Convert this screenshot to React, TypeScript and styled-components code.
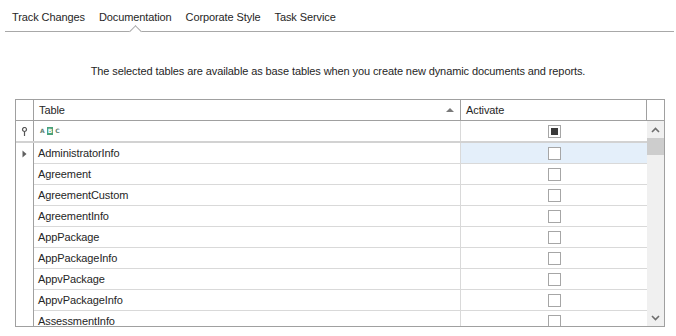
import styled, { createGlobalStyle } from 'styled-components';

const GlobalStyle = createGlobalStyle`
  html, body {
    margin: 0;
    padding: 0;
    background: #ffffff;
  }
  body {
    font-family: 'Liberation Sans', Arial, sans-serif;
    font-size: 11px;
    letter-spacing: -0.1px;
    color: #2b2b2b;
  }
`;

const Page = styled.div`
  width: 676px;
  height: 336px;
  overflow: hidden;
  display: flex;
  flex-direction: column;
`;

const TabBar = styled.div`
  display: flex;
  margin: 0 2px 0 5px;
  height: 31px;
  border-bottom: 1px solid #a8a8a8;
`;

const Tab = styled.div<{ $active?: boolean }>`
  position: relative;
  padding: 11px 7px 0;
  line-height: 13px;
  color: #262626;

  &::after {
    content: '';
    display: ${(p) => (p.$active ? 'block' : 'none')};
    position: absolute;
    left: 50%;
    bottom: -5px;
    width: 8px;
    height: 8px;
    margin-left: -4px;
    background: #ffffff;
    border-top: 1px solid #a8a8a8;
    border-left: 1px solid #a8a8a8;
    transform: rotate(45deg);
  }
`;

const Description = styled.div`
  text-align: center;
  margin-top: 33px;
  line-height: 13px;
  color: #262626;
`;

const Grid = styled.div`
  margin: 21px 0 0 15px;
  width: 648px;
  height: 226px;
  border: 1px solid #a0a0a0;
  display: flex;
  flex-direction: column;
  overflow: hidden;
`;

const HeaderRow = styled.div`
  display: grid;
  grid-template-columns: 18px 427px 186px 17px;
  height: 20px;
  border-bottom: 1px solid #a0a0a0;
`;

const HeaderCell = styled.div<{ $last?: boolean }>`
  display: flex;
  align-items: center;
  justify-content: space-between;
  padding: 0 5px;
  border-right: ${(p) => (p.$last ? 'none' : '1px solid #a0a0a0')};
  color: #262626;
`;

const SortArrow = styled.span`
  width: 0;
  height: 0;
  border-left: 4px solid transparent;
  border-right: 4px solid transparent;
  border-bottom: 4px solid #7a7a7a;
  margin-right: 1px;
`;

const Body = styled.div`
  flex: 1;
  display: flex;
  min-height: 0;
`;

const Rows = styled.div`
  flex: 1;
  display: flex;
  flex-direction: column;
  overflow: hidden;
`;

const FilterRow = styled.div`
  display: grid;
  grid-template-columns: 18px 427px 186px;
  height: 20px;
  flex-shrink: 0;
  border-bottom: 2px solid #d2d2d2;
`;

const DataRow = styled.div`
  display: grid;
  grid-template-columns: 18px 427px 186px;
  height: 21px;
  flex-shrink: 0;
`;

const IndicatorCell = styled.div`
  display: flex;
  align-items: center;
  justify-content: center;
  border-right: 1px solid #a0a0a0;
`;

const TextCell = styled.div`
  display: flex;
  align-items: center;
  padding-left: 4px;
  border-right: 1px solid #d9d9d9;
  border-bottom: 1px solid #d9d9d9;
  color: #262626;
`;

const FilterTextCell = styled.div`
  display: flex;
  align-items: center;
  padding-left: 5px;
  border-right: 1px solid #d9d9d9;
`;

const CheckCell = styled.div<{ $focused?: boolean; $filter?: boolean }>`
  display: flex;
  align-items: center;
  justify-content: center;
  background: ${(p) => (p.$focused ? '#e4effa' : '#ffffff')};
  border-bottom: ${(p) => (p.$filter ? 'none' : '1px solid #d9d9d9')};
`;

const CheckBox = styled.span<{ $mixed?: boolean }>`
  box-sizing: border-box;
  width: 13px;
  height: 13px;
  border: 1px solid #a6a6a6;
  background: #ffffff;
  display: flex;
  align-items: center;
  justify-content: center;

  &::before {
    content: '';
    display: ${(p) => (p.$mixed ? 'block' : 'none')};
    width: 7px;
    height: 7px;
    background: #3a3a3a;
  }
`;

const FilterIcon = styled.span`
  display: flex;
  align-items: center;
  gap: 1px;
  font-family: 'DejaVu Sans', sans-serif;
  font-size: 6px;
  font-weight: bold;
  letter-spacing: 0;
`;

const FilterLetter = styled.span<{ $marked?: boolean }>`
  padding: 1px;
  line-height: 6px;
  background: ${(p) => (p.$marked ? '#4aa27a' : 'transparent')};
  color: ${(p) => (p.$marked ? '#ffffff' : '#5f7f70')};
`;

const Scrollbar = styled.div`
  width: 17px;
  background: #f0f0f0;
  display: flex;
  flex-direction: column;
`;

const ScrollButton = styled.div`
  height: 17px;
  display: flex;
  align-items: center;
  justify-content: center;
`;

const Thumb = styled.div`
  height: 17px;
  background: #cdcdcd;
`;

const Track = styled.div`
  flex: 1;
`;

const tables = [
  'AdministratorInfo',
  'Agreement',
  'AgreementCustom',
  'AgreementInfo',
  'AppPackage',
  'AppPackageInfo',
  'AppvPackage',
  'AppvPackageInfo',
  'AssessmentInfo',
];

const Chevron = ({ up }: { up?: boolean }) => (
  <svg width="9" height="6" viewBox="0 0 9 6">
    <path
      d={up ? 'M1 5 L4.5 1.5 L8 5' : 'M1 1 L4.5 4.5 L8 1'}
      fill="none"
      stroke="#6e6e6e"
      strokeWidth="1.6"
    />
  </svg>
);

const App = () => {
  return (
    <Page>
      <GlobalStyle />
      <TabBar>
        <Tab>Track Changes</Tab>
        <Tab $active>Documentation</Tab>
        <Tab>Corporate Style</Tab>
        <Tab>Task Service</Tab>
      </TabBar>
      <Description>
        The selected tables are available as base tables when you create new dynamic documents and reports.
      </Description>
      <Grid>
        <HeaderRow>
          <HeaderCell />
          <HeaderCell>
            Table
            <SortArrow />
          </HeaderCell>
          <HeaderCell>Activate</HeaderCell>
          <HeaderCell $last />
        </HeaderRow>
        <Body>
          <Rows>
            <FilterRow>
              <IndicatorCell>
                <svg width="7" height="9" viewBox="0 0 7 9">
                  <circle cx="3.5" cy="2.5" r="2" fill="none" stroke="#555" strokeWidth="1.2" />
                  <line x1="3.5" y1="4.5" x2="3.5" y2="9" stroke="#555" strokeWidth="1.2" />
                </svg>
              </IndicatorCell>
              <FilterTextCell>
                <FilterIcon>
                  <FilterLetter>A</FilterLetter>
                  <FilterLetter $marked>B</FilterLetter>
                  <FilterLetter>C</FilterLetter>
                </FilterIcon>
              </FilterTextCell>
              <CheckCell $filter>
                <CheckBox $mixed />
              </CheckCell>
            </FilterRow>
            {tables.map((name, i) => (
              <DataRow key={name}>
                <IndicatorCell>
                  {i === 0 ? (
                    <svg width="5" height="8" viewBox="0 0 5 8">
                      <path d="M0.5 0.5 L4.5 4 L0.5 7.5 Z" fill="#606060" />
                    </svg>
                  ) : null}
                </IndicatorCell>
                <TextCell>{name}</TextCell>
                <CheckCell $focused={i === 0}>
                  <CheckBox />
                </CheckCell>
              </DataRow>
            ))}
          </Rows>
          <Scrollbar>
            <ScrollButton>
              <Chevron up />
            </ScrollButton>
            <Thumb />
            <Track />
            <ScrollButton>
              <Chevron />
            </ScrollButton>
          </Scrollbar>
        </Body>
      </Grid>
    </Page>
  );
};

export default App;
